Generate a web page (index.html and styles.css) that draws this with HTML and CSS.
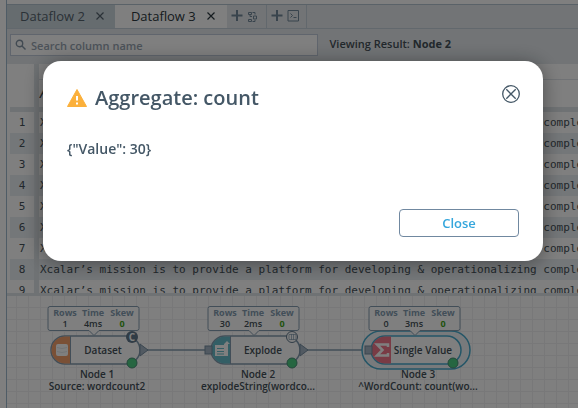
FILE: index.html
```html
<!DOCTYPE html>
<html lang="en">
<head>
<meta charset="utf-8">
<title>Dataflow</title>
<link rel="stylesheet" href="styles.css">
</head>
<body>
<div class="workbook" aria-hidden="true">
  <nav class="tabs">
    <div class="tab tab-idle"><span>Dataflow 2</span><button class="tab-close" aria-label="Close Dataflow 2"><svg viewBox="0 0 8 8"><path d="M.5.5l7 7M7.500.5l-7 7"/></svg></button></div>
    <div class="tab tab-active"><span>Dataflow 3</span><button class="tab-close" aria-label="Close Dataflow 3"><svg viewBox="0 0 8 8"><path d="M.5.5l7 7M7.500.5l-7 7"/></svg></button></div>
    <button class="tab-add" aria-label="New dataflow"><svg viewBox="0 0 28 14"><path class="plus" d="M6 1v11M.5 6.500h11"/><path d="M17.500 3.500h3v2h-3zM17.500 10.500h3v2h-3zM22.500 7h3v3h-3zM21.500 3.500h2.500v2M24 11v1.500h-2.500M19 5.500v2h2"/></svg></button>
    <button class="tab-add" aria-label="New SQL tab"><svg viewBox="0 0 28 14"><path class="plus" d="M6 1v11M.5 6.500h11"/><path d="M17 1.500h10.500v10.500h-10.500zM19.500 4.500l2 2-2 2M22.500 8.500h3"/></svg></button>
  </nav>
  <div class="toolbar">
    <label class="search">
      <svg viewBox="0 0 12 12"><circle cx="4.500" cy="4.500" r="3.200"/><path d="M7 7l3.500 3.500"/></svg>
      <input type="text" placeholder="Search column name" aria-label="Search column name">
    </label>
    <p class="viewing">Viewing Result: <b>Node 2</b></p>
  </div>
  <div class="table-wrap">
    <table>
      <thead><tr><th></th><th><i>A</i></th></tr></thead>
      <tbody>
        <tr><td>1</td><td>Xcalar’s mission is to provide a platform for developing &amp; operationalizing complex</td></tr>
        <tr><td>2</td><td>Xcalar’s mission is to provide a platform for developing &amp; operationalizing complex</td></tr>
        <tr><td>3</td><td>Xcalar’s mission is to provide a platform for developing &amp; operationalizing complex</td></tr>
        <tr><td>4</td><td>Xcalar’s mission is to provide a platform for developing &amp; operationalizing complex</td></tr>
        <tr><td>5</td><td>Xcalar’s mission is to provide a platform for developing &amp; operationalizing complex</td></tr>
        <tr><td>6</td><td>Xcalar’s mission is to provide a platform for developing &amp; operationalizing complex</td></tr>
        <tr><td>7</td><td>Xcalar’s mission is to provide a platform for developing &amp; operationalizing complex</td></tr>
        <tr><td>8</td><td>Xcalar’s mission is to provide a platform for developing &amp; operationalizing complex</td></tr>
        <tr><td>9</td><td>Xcalar’s mission is to provide a platform for developing &amp; operationalizing complex</td></tr>
      </tbody>
    </table>
  </div>
  <div class="canvas">
    <svg class="graph" height="112">
      <defs>
        <pattern id="grid" width="12" height="12" patternUnits="userSpaceOnUse" x="9" y="11"><path class="grid-line" d="M.5 0v12M0 .5h12"/></pattern>
        <g id="stats">
          <path class="box" d="M2 .5h87q2 0 2 2v20q0 2-2 2H51l-5 5-5-5H2q-2 0-2-2v-20q0-2 2-2z"/>
          <text class="stat-label" x="17" y="10">Rows</text><text class="stat-label" x="45" y="10">Time</text><text class="stat-label" x="74" y="10">Skew</text>
          <text class="skew" x="74" y="21">0</text>
        </g>
        <path id="arrow" class="port" d="M0-6l8 6-8 6z"/>
      </defs>
      <rect class="grid" width="100%" height="100%"/>
      <path class="link" d="M140 54h60M300 54h60"/>

      <g transform="translate(41 10)">
        <rect class="body" x="3" y="30" width="89" height="28" rx="14"/>
        <path class="fill-source" d="M22 30.500h-5a13.500 13.500 0 0 0 0 27h5z"/>
        <path class="divider" d="M22.500 30v28"/>
        <rect class="glyph" x="8" y="38" width="12" height="12" rx="2"/>
        <path class="glyph-line" d="M9 41.500q5 2 10 0M9 45.500q5 2 10 0"/>
        <use href="#arrow" x="92" y="44"/>
        <text class="name" x="55" y="48">Dataset</text>
        <circle class="badge-c" cx="84" cy="31" r="6"/><text class="badge-text" x="84" y="35">C</text>
        <circle class="done" cx="84" cy="57" r="5"/>
        <use href="#stats"/><text class="stat" x="17" y="21">1</text><text class="stat" x="45" y="21">4ms</text>
        <text class="caption" x="49" y="72">Node 1</text><text class="caption" x="49" y="84">Source: wordcount2</text>
      </g>

      <g transform="translate(201 10)">
        <rect class="body" x="3" y="30" width="89" height="28" rx="14"/>
        <path class="fill-explode" d="M22 30.500h-5a13.500 13.500 0 0 0 0 27h5z"/>
        <path class="divider" d="M22.500 30v28"/>
        <path class="glyph" d="M7 39h9v-1l3-3 3 3h-2v12H7z"/><path class="explode-line" d="M9 42.500h7M9 45.500h7M9 48h7"/>
        <rect class="port" x="-3" y="40" width="7" height="8"/>
        <use href="#arrow" x="92" y="44"/>
        <text class="name" x="55" y="48">Explode</text>
        <circle class="badge-t" cx="84" cy="31" r="5.500"/><path class="badge-grid" d="M81 28.500h7v5h-7zM83.500 28v6M85.500 28v6"/>
        <circle class="done" cx="84" cy="57" r="5"/>
        <use href="#stats"/><text class="stat" x="17" y="21">30</text><text class="stat" x="45" y="21">2ms</text>
        <text class="caption" x="50" y="72">Node 2</text><text class="caption" x="50" y="84">explodeString(wordco...</text>
      </g>

      <g transform="translate(361 10)">
        <rect class="halo" x="-6" y="25" width="108" height="38" rx="19"/>
        <rect class="body selected" x="3" y="30" width="90" height="28" rx="14"/>
        <path class="fill-single" d="M23 30.500h-6a13.500 13.500 0 0 0 0 27h6z"/>
        <path class="sigma" d="M20 41v-2.500H9l5.500 5.500L9 49.500h11V47"/>
        <rect class="port" x="-3" y="40" width="7" height="8"/>
        <text class="name" x="55" y="48">Single Value</text>
        <circle class="done" cx="85" cy="57" r="5"/>
        <g transform="translate(1 0)"><use href="#stats"/><text class="stat" x="17" y="21">0</text><text class="stat" x="45" y="21">3ms</text></g>
        <text class="caption" x="50" y="72">Node 3</text><text class="caption" x="50" y="84">^WordCount: count(wo...</text>
      </g>
    </svg>
  </div>
</div>

<div class="overlay">
  <section class="modal" role="dialog" aria-modal="true" aria-labelledby="modal-title">
    <header class="modal-head">
      <svg class="warn" viewBox="0 0 20 18"><path class="warn-shape" d="M10 .5L19.500 17.500H.5z"/><path class="warn-mark" d="M10 7v4.500M10 13.500v2"/></svg>
      <h1 id="modal-title">Aggregate: count</h1>
      <button class="dismiss" aria-label="Dismiss"><svg viewBox="0 0 18 18"><circle cx="9" cy="9" r="8.300"/><path d="M4.300 4.300l9.400 9.400M13.700 4.300l-9.400 9.400"/></svg></button>
    </header>
    <p class="message">{"Value": 30}</p>
    <footer class="modal-foot"><button class="close">Close</button></footer>
  </section>
</div>
</body>
</html>
```
FILE: styles.css
```css
* { box-sizing: border-box; }

body {
  margin: 0;
  height: 100vh;
  overflow: hidden;
  background: #fff;
  color: #445058;
  font-family: "Open Sans", "Noto Sans", sans-serif;
}

button {
  margin: 0;
  padding: 0;
  border: 0;
  background: none;
  font: inherit;
  color: inherit;
}

svg { display: block; fill: none; stroke: currentColor; }
p, h1 { margin: 0; }

.workbook {
  display: flex;
  flex-direction: column;
  height: 100vh;
  margin-left: 6px;
  padding-top: 4px;
  border-left: 1px solid #9fb8cc;
}

/* Tabs */
.tabs {
  display: flex;
  height: 25px;
  flex: none;
  background: #e4e9ed;
  border-top: 1px solid #b4c4d1;
  border-bottom: 1px solid #c4d0da;
}

.tab {
  display: flex;
  align-items: center;
  gap: 11px;
  padding: 0 11px 2px 13px;
  font-size: 13px;
}
.tab-idle { background: #ccd8df; color: #56646e; }
.tab-active { background: #fff; color: #2c3840; padding: 0 12px 2px 16px; }
.tab-close svg { width: 8px; height: 8px; stroke-width: 1.2; }

.tab-add {
  width: 40px;
  padding: 0 4px 2px;
  border-right: 1px solid #c4d0da;
  color: #72889a;
}
.tab-add svg { width: 28px; height: 14px; }
.plus { stroke-width: 2; }

/* Toolbar */
.toolbar {
  display: flex;
  align-items: flex-start;
  gap: 11px;
  height: 35px;
  flex: none;
  padding: 5px 3px 0;
  background: #e4e9ed;
}

.search {
  display: flex;
  align-items: center;
  gap: 4px;
  width: 54.6%;
  height: 22px;
  padding: 0 4px;
  border: 1px solid #c0cbda;
  background: #fff;
  color: #8495a5;
}
.search svg { width: 12px; height: 12px; stroke-width: 1.400; flex: none; }
.search input {
  flex: 1;
  min-width: 0;
  padding: 0;
  border: 0;
  background: none;
  font: 600 11px "Open Sans", sans-serif;
}
.search input::placeholder { color: #98a5b2; }
.viewing { font-size: 11px; font-weight: 600; line-height: 20px; white-space: nowrap; }
.viewing b { font-weight: 700; }

/* Result table */
.table-wrap {
  height: 229px;
  flex: none;
  overflow: hidden;
  padding-left: 3px;
}

table {
  width: 100%;
  border-collapse: separate;
  border-spacing: 0;
  table-layout: fixed;
  font: 11px "DejaVu Sans Mono", monospace;
}
th, td { padding: 0; height: 21px; white-space: nowrap; overflow: hidden; }
th { height: 48px; border-bottom: 5px solid #dfe5e9; text-align: left; }
th:first-child, td:first-child {
  width: 29px;
  border-right: 5px solid #dfe5e9;
  text-align: center;
}
th:last-child, td:last-child { padding-left: 1px; }
th:last-child { background: linear-gradient(#e0e5ea, #e0e5ea) 0 15px / 100% 1px no-repeat; padding-top: 12px; }
th i { font: italic 16px "Open Sans", sans-serif; }
tbody tr:nth-child(even) { background: #e9eef2; }

/* Dataflow canvas */
.canvas {
  flex: 1;
  min-height: 0;
  overflow: hidden;
  border-top: 3px solid #dfe5e9;
}
.graph { width: 100%; font-family: "Open Sans", sans-serif; }
.graph text { stroke: none; fill: #445058; text-anchor: middle; font-size: 10px; font-weight: 600; }
.grid { fill: url(#grid); stroke: none; }
.grid-line { stroke: #f0f0f2; }
.link { stroke: #849cb0; stroke-width: 1.500; }
.box { fill: #fff; stroke: #849cb0; }
.graph .stat-label { fill: #849cb0; font-size: 9px; font-weight: 700; }
.graph .stat { font-size: 9px; }
.graph .skew { fill: #43a519; font-size: 9px; font-weight: 700; }
.body { fill: #fff; stroke: #849cb0; stroke-width: 1.500; }
.selected { stroke: #48abce; }
.halo { fill: #f0f5f9; stroke: #48abce; stroke-width: 1.500; }
.fill-source { fill: #f5a06c; stroke: none; }
.fill-explode { fill: #66bdca; stroke: none; }
.fill-single { fill: #f3768b; stroke: none; }
.divider { stroke: #849cb0; }
.glyph { fill: #fff; stroke: none; }
.glyph-line { stroke: #e4e9ed; }
.explode-line { stroke: #66bdca; }
.sigma { stroke: #fff; stroke-width: 2.500; }
.port { fill: #a4b4c4; stroke: #748ca0; }
.badge-c { fill: #60788c; stroke: none; }
.graph .badge-text { fill: #fff; font-size: 10px; font-weight: 700; }
.badge-t { fill: #fff; stroke: #60788c; }
.badge-grid { stroke: #849cb0; stroke-width: 0.700; }
.done { fill: #4dcc82; stroke: #468f75; }

/* Modal */
.overlay {
  position: fixed;
  inset: 0;
  display: flex;
  align-items: flex-start;
  justify-content: center;
  padding: 61px 0 0 8px;
  background: rgba(0, 0, 0, 0.5);
}

.modal {
  width: 500px;
  padding: 24px;
  border-radius: 18px;
  background: #fff;
  box-shadow: 0 2px 20px rgba(0, 0, 0, 0.400);
  color: #445766;
}

.modal-head { display: flex; align-items: center; gap: 8px; height: 26px; }
.warn { width: 20px; height: 18px; }
.warn-shape { fill: #fbb03b; stroke: #fbb03b; stroke-linejoin: round; }
.warn-mark { stroke: #fff; stroke-width: 2; }
h1 { font-size: 20px; font-weight: 600; line-height: 26px; }
.dismiss { margin: 0 -1px 8px auto; }
.dismiss svg { width: 18px; height: 18px; stroke-width: 1.300; }
.message { margin-top: 28px; font-size: 14px; font-weight: 600; line-height: 20px; }
.modal-foot { display: flex; justify-content: flex-end; margin-top: 50px; }
.close {
  width: 120px;
  height: 28px;
  border: 1px solid #7088a0;
  border-radius: 4px;
  color: #35a6dc;
  font-size: 13px;
  font-weight: 600;
}
```
